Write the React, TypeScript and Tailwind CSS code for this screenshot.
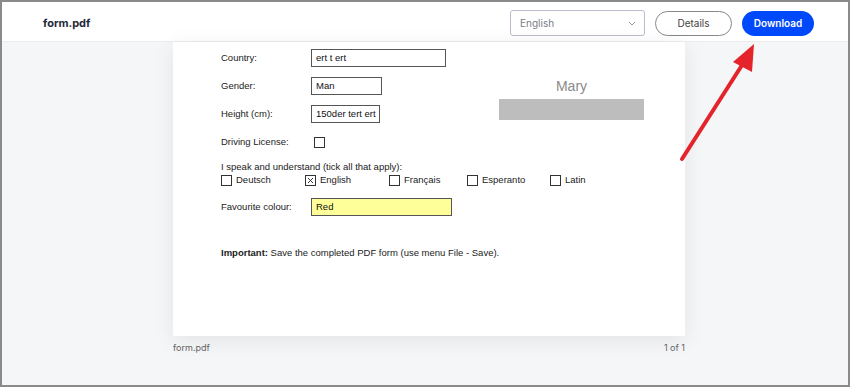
import React from 'react';

const pdfFont = { fontFamily: '"Liberation Sans", Arial, sans-serif' };

const Box: React.FC<{ checked?: boolean }> = ({ checked }) => (
  <span className="inline-flex items-center justify-center w-[11px] h-[11px] border border-[#333] bg-white">
    {checked && (
      <svg width="7" height="7" viewBox="0 0 7 7">
        <path d="M1 1 L6 6 M6 1 L1 6" stroke="#333" strokeWidth="1" />
      </svg>
    )}
  </span>
);

const Field: React.FC<{ label: string; value: string; width: string; yellow?: boolean }> = ({ label, value, width, yellow }) => (
  <div className="flex items-center h-[18px]">
    <span className="w-[90px] text-[9.5px] text-[#222]">{label}</span>
    <div className={`${width} h-[18px] border border-[#555] flex items-center px-[4px] text-[9.5px] text-[#111] overflow-hidden whitespace-nowrap ${yellow ? 'bg-[#ffff99]' : 'bg-white'}`}>
      {value}
    </div>
  </div>
);

const languages = [
  { name: 'Deutsch', w: 'w-[84px]' },
  { name: 'English', w: 'w-[84px]', checked: true },
  { name: 'Français', w: 'w-[78px]' },
  { name: 'Esperanto', w: 'w-[83px]' },
  { name: 'Latin', w: 'w-[50px]' },
];

export default function App() {
  return (
    <div className="relative w-[850px] h-[387px] border-2 border-[#8a8a8a] bg-[#f5f6f8] flex flex-col overflow-hidden" style={{ fontFamily: 'Inter, "Liberation Sans", sans-serif' }}>
      <header className="h-[40px] shrink-0 bg-white border-b border-[#ececec] flex items-center pt-[3px] pl-[41px] pr-[34px]">
        <span className="text-[11px] font-bold text-[#1f2937]">form.pdf</span>
        <div className="ml-auto flex items-center">
          <div className="w-[135px] h-[26px] border border-[#b9bccb] rounded-[3px] flex items-center pl-[9px] pr-[8px] text-[10px] text-[#7a7d85]">
            English
            <svg className="ml-auto" width="8" height="5" viewBox="0 0 8 5">
              <path d="M1 1 L4 4 L7 1" fill="none" stroke="#9a9da6" strokeWidth="1" />
            </svg>
          </div>
          <button className="ml-[10px] w-[77px] h-[25px] rounded-full border border-[#888] bg-white text-[10px] text-[#444]">Details</button>
          <button className="ml-[10px] w-[72px] h-[25px] rounded-full bg-[#0049fa] text-[10px] font-semibold text-white">Download</button>
        </div>
      </header>

      <main className="flex-1 flex flex-col pl-[171px]">
        <div className="w-[512px] h-[294px] bg-white shadow-[0_4px_20px_rgba(0,0,0,0.08)] pl-[48px] pt-[7px] relative" style={pdfFont}>
          <div className="flex flex-col gap-[10px]">
            <Field label="Country:" value="ert t ert" width="w-[135px]" />
            <Field label="Gender:" value="Man" width="w-[71px]" />
            <Field label="Height (cm):" value="150der tert ert" width="w-[69px]" />
            <div className="flex items-center h-[18px]">
              <span className="w-[93px] text-[9.5px] text-[#222]">Driving License:</span>
              <Box />
            </div>
          </div>
          <div className="mt-[10px] text-[9.5px] text-[#222] leading-[12px]">I speak and understand (tick all that apply):</div>
          <div className="flex items-center text-[9.5px] text-[#222]">
            {languages.map(l => (
              <div key={l.name} className={`flex items-center gap-[4px] ${l.w}`}>
                <Box checked={l.checked} />
                <span>{l.name}</span>
              </div>
            ))}
          </div>
          <div className="mt-[11px]">
            <Field label="Favourite colour:" value="Red" width="w-[141px]" yellow />
          </div>
          <p className="mt-[30px] text-[9.5px] text-[#222]">
            <span className="font-bold">Important:</span> Save the completed PDF form (use menu File - Save).
          </p>

          <div className="absolute left-[326px] top-[34px] w-[145px] flex flex-col items-center">
            <span className="text-[14px] text-[#8a8a8a]">Mary</span>
            <div className="mt-[2px] w-[145px] h-[21px] bg-[#bdbdbd]" />
          </div>
        </div>
        <div className="w-[512px] flex justify-between mt-[5px] text-[9px] text-[#666]">
          <span>form.pdf</span>
          <span>1 of 1</span>
        </div>
      </main>

      <svg className="absolute left-0 top-0 pointer-events-none" width="850" height="387" viewBox="0 0 850 387">
        <line x1="680" y1="157" x2="742" y2="60" stroke="#e5232b" strokeWidth="4" strokeLinecap="round" />
        <polygon points="752,42 731,60 750,70" fill="#e5232b" />
      </svg>
    </div>
  );
}
